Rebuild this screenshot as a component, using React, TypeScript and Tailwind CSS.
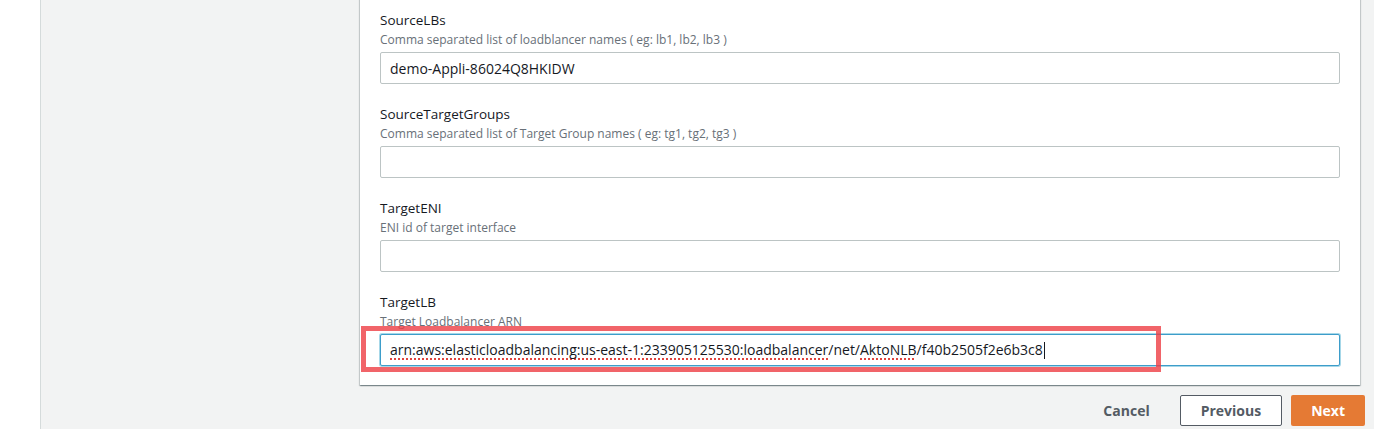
import React from 'react';

interface Field {
  label: string;
  hint: string;
  value: string;
}

const fields: Field[] = [
  {
    label: 'SourceLBs',
    hint: 'Comma separated list of loadblancer names ( eg: lb1, lb2, lb3 )',
    value: 'demo-Appli-86024Q8HKIDW',
  },
  {
    label: 'SourceTargetGroups',
    hint: 'Comma separated list of Target Group names ( eg: tg1, tg2, tg3 )',
    value: '',
  },
  { label: 'TargetENI', hint: 'ENI id of target interface', value: '' },
];

const FieldLabel = ({ label, hint }: { label: string; hint: string }) => (
  <>
    <p className="text-[13.5px] leading-5 text-[#16191f]">{label}</p>
    <p className="mt-0.5 text-xs leading-4 text-[#687078]">{hint}</p>
  </>
);

const App = () => {
  return (
    <div className="flex min-h-[429px] w-full overflow-hidden bg-[#f2f3f3] font-['Open_Sans',sans-serif]">
      {/* left rail */}
      <div className="w-[41px] shrink-0 border-r border-[#d5dbdb] bg-white"></div>

      <div className="flex-1 pl-[319px]">
        <div className="flex w-[1005px] flex-col">
          {/* parameters card */}
          <div className="-mt-5 flex w-[1000px] flex-col gap-5 bg-white px-5 pt-[30px] pb-[19px] shadow-[0_1px_1px_0_rgba(0,28,36,0.3),1px_1px_1px_0_rgba(0,28,36,0.15),-1px_1px_1px_0_rgba(0,28,36,0.15)]">
            {fields.map((f) => (
              <div key={f.label}>
                <FieldLabel label={f.label} hint={f.hint} />
                <input
                  readOnly
                  value={f.value}
                  className="mt-1 block h-8 w-full rounded-[2px] border border-[#bcc4c4] bg-white px-[9px] text-sm text-[#16191f] outline-none"
                />
              </div>
            ))}

            {/* TargetLB, focused */}
            <div>
              <FieldLabel label="TargetLB" hint="Target Loadbalancer ARN" />
              <div className="relative mt-1">
                <div className="flex h-8 w-full items-center rounded-[2px] border border-[#3d9dca] bg-white px-[9px] text-sm text-[#16191f] shadow-[0_0_0_1px_rgba(0,140,190,0.35)]">
                  <span className="whitespace-pre">
                    <span className="underline decoration-[#e0443e] decoration-dotted decoration-[length:1.5px] underline-offset-[3px]">
                      arn:aws:elasticloadbalancing:us-east-1:233905125530:loadbalancer
                    </span>
                    /net/
                    <span className="underline decoration-[#e0443e] decoration-dotted decoration-[length:1.5px] underline-offset-[3px]">
                      AktoNLB
                    </span>
                    /f40b2505f2e6b3c8
                  </span>
                  <span className="ml-px h-[17px] w-px bg-[#16191f]"></span>
                </div>
                {/* highlight box */}
                <div className="pointer-events-none absolute -top-2 -left-[19px] h-[46px] w-[800px] border-[5px] border-[#ee3d44]/80"></div>
              </div>
            </div>
          </div>

          {/* footer actions */}
          <div className="mt-[10px] flex items-center justify-end text-sm font-bold">
            <button className="h-[31px] px-5 text-[#545b64]">Cancel</button>
            <button className="ml-[10px] h-[31px] rounded-[2px] border border-[#545b64] bg-white px-5 text-[#545b64]">
              Previous
            </button>
            <button className="ml-[9px] h-[31px] rounded-[2px] bg-[#e57a34] px-5 text-white">Next</button>
          </div>
        </div>
      </div>
    </div>
  );
};

export default App;
